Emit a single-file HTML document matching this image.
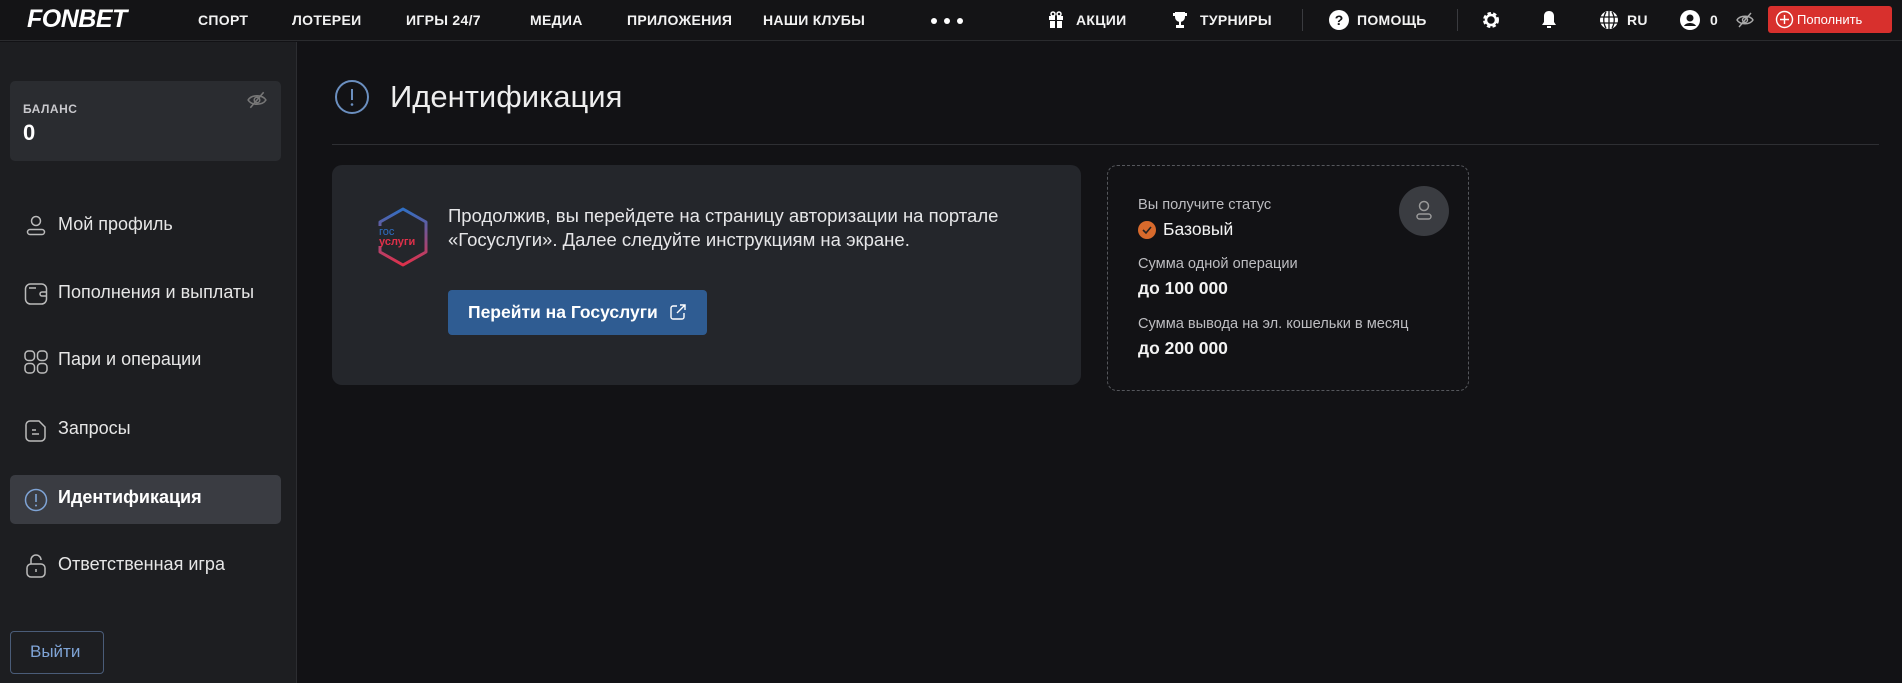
<!DOCTYPE html>
<html><head><meta charset="utf-8"><style>
*{margin:0;padding:0;box-sizing:border-box}
body{width:1902px;height:683px;background:#121215;font-family:"Liberation Sans","DejaVu Sans",sans-serif;color:#e8e8ea;position:relative;overflow:hidden}
.abs{position:absolute}
.hdr{left:0;top:0;width:1902px;height:41px;background:#141416;border-bottom:1px solid #2a2b2e}
.nav{top:12px;font-size:14px;font-weight:bold;color:#f2f2f2;white-space:nowrap;letter-spacing:.3px}
.side{left:0;top:42px;width:297px;height:641px;background:#1d1e21;border-right:1px solid #2c2d31}
.mi{left:58px;font-size:18px;color:#e6e6e6;white-space:nowrap}
.ic{left:24px}
</style></head><body>
<div class="abs hdr"></div>
<div class="abs" style="left:27px;top:5px;font-size:25px;font-weight:bold;font-style:italic;color:#fff;letter-spacing:-.5px">FONBET</div>
<div class="abs nav" style="left:198px">СПОРТ</div>
<div class="abs nav" style="left:292px">ЛОТЕРЕИ</div>
<div class="abs nav" style="left:406px">ИГРЫ 24/7</div>
<div class="abs nav" style="left:530px">МЕДИА</div>
<div class="abs nav" style="left:627px">ПРИЛОЖЕНИЯ</div>
<div class="abs nav" style="left:763px">НАШИ КЛУБЫ</div>
<svg class="abs" style="left:930px;top:17px" width="34" height="8"><circle cx="4" cy="4" r="3" fill="#fff"/><circle cx="17" cy="4" r="3" fill="#fff"/><circle cx="30" cy="4" r="3" fill="#fff"/></svg>
<svg class="abs" style="left:1048px;top:11px" width="16" height="17" viewBox="0 0 16 17"><rect x="1" y="5" width="14" height="4" fill="#fff"/><rect x="2" y="10" width="12" height="7" fill="#fff"/><rect x="7" y="5" width="2" height="12" fill="#141416"/><circle cx="5" cy="3" r="2" fill="none" stroke="#fff" stroke-width="1.5"/><circle cx="11" cy="3" r="2" fill="none" stroke="#fff" stroke-width="1.5"/></svg>
<div class="abs nav" style="left:1076px">АКЦИИ</div>
<svg class="abs" style="left:1172px;top:11px" width="16" height="17" viewBox="0 0 16 17"><path d="M3 1h10v5a5 5 0 0 1-10 0z M1 2h2v3H1z M13 2h2v3h-2z M7 10h2v4H7z M4 14h8v3H4z" fill="#fff"/></svg>
<div class="abs nav" style="left:1200px">ТУРНИРЫ</div>
<div class="abs" style="left:1302px;top:9px;width:1px;height:22px;background:#3a3b3f"></div>
<svg class="abs" style="left:1329px;top:10px" width="20" height="20"><circle cx="10" cy="10" r="10" fill="#fff"/><text x="10" y="15" font-size="14" font-weight="bold" text-anchor="middle" fill="#141416" font-family="Liberation Sans">?</text></svg>
<div class="abs nav" style="left:1357px">ПОМОЩЬ</div>
<div class="abs" style="left:1457px;top:9px;width:1px;height:22px;background:#3a3b3f"></div>
<svg class="abs" style="left:1482px;top:11px" width="18" height="18" viewBox="0 0 18 18"><circle cx="9" cy="9" r="6" fill="none" stroke="#fff" stroke-width="4" stroke-dasharray="3 2"/><circle cx="9" cy="9" r="5" fill="none" stroke="#fff" stroke-width="2.5"/></svg>
<svg class="abs" style="left:1541px;top:10px" width="16" height="19" viewBox="0 0 16 19"><path d="M8 1c-3 0-5 2-5 5v6l-2 3h14l-2-3V6c0-3-2-5-5-5z M6 16h4v2H6z" fill="#fff"/></svg>
<svg class="abs" style="left:1599px;top:10px" width="20" height="20" viewBox="0 0 20 20"><circle cx="10" cy="10" r="9" fill="#fff"/><path d="M1 7h18M1 13h18M10 1v18M7 2c-3 5-3 11 0 16M13 2c3 5 3 11 0 16" stroke="#141416" stroke-width="1.3" fill="none"/></svg>
<div class="abs nav" style="left:1627px">RU</div>
<svg class="abs" style="left:1680px;top:10px" width="20" height="20" viewBox="0 0 20 20"><circle cx="10" cy="10" r="10" fill="#fff"/><circle cx="10" cy="8" r="3.5" fill="#141416"/><path d="M4 16c2-4 10-4 12 0" fill="#141416"/></svg>
<div class="abs nav" style="left:1710px">0</div>
<svg class="abs" style="left:1736px;top:11px" width="18" height="18" viewBox="0 0 18 18" fill="none" stroke="#aaa" stroke-width="1.4"><path d="M1 9c3-5 13-5 16 0c-3 5-13 5-16 0z"/><circle cx="9" cy="9" r="2.5"/><path d="M3 16L15 2"/></svg>
<div class="abs" style="left:1768px;top:6px;width:124px;height:27px;background:#d8302d;border-radius:3px"></div>
<svg class="abs" style="left:1775px;top:10px" width="19" height="19"><circle cx="9.5" cy="9.5" r="8" fill="none" stroke="#fff" stroke-width="1.4"/><path d="M9.5 5v9M5 9.5h9" stroke="#fff" stroke-width="1.4"/></svg>
<div class="abs" style="left:1797px;top:12px;font-size:13px;color:#fff">Пополнить</div>

<div class="abs side"></div>
<div class="abs" style="left:10px;top:81px;width:271px;height:80px;background:#2a2c30;border-radius:5px"></div>
<div class="abs" style="left:23px;top:102px;font-size:12px;font-weight:bold;color:#c8c8cc;letter-spacing:.5px">БАЛАНС</div>
<div class="abs" style="left:23px;top:120px;font-size:22px;font-weight:bold;color:#fff">0</div>
<svg class="abs" style="left:247px;top:90px" width="20" height="20" viewBox="0 0 18 18" fill="none" stroke="#777" stroke-width="1.4"><path d="M1 9c3-5 13-5 16 0c-3 5-13 5-16 0z"/><circle cx="9" cy="9" r="2.5"/><path d="M3 16L15 2"/></svg>

<svg class="abs ic" style="top:214px" width="24" height="24" viewBox="0 0 24 24" fill="none" stroke="#bbb" stroke-width="1.5"><circle cx="12" cy="7" r="4.5"/><rect x="3.5" y="15.5" width="17" height="5" rx="2.5"/></svg>
<div class="abs mi" style="top:214px">Мой профиль</div>
<svg class="abs ic" style="top:282px" width="24" height="24" viewBox="0 0 24 24" fill="none" stroke="#bbb" stroke-width="1.5"><rect x="1.5" y="2" width="21" height="20" rx="5"/><path d="M5 6h7M22 10h-4a2 2 0 0 0 0 4h4"/></svg>
<div class="abs mi" style="top:282px">Пополнения и выплаты</div>
<svg class="abs ic" style="top:350px" width="24" height="24" viewBox="0 0 24 24" fill="none" stroke="#bbb" stroke-width="1.5"><rect x="1" y="1" width="9.5" height="9.5" rx="3.5"/><rect x="13.5" y="1" width="9.5" height="9.5" rx="3.5"/><rect x="1" y="13.5" width="9.5" height="9.5" rx="3.5"/><rect x="13.5" y="13.5" width="9.5" height="9.5" rx="3.5"/></svg>
<div class="abs mi" style="top:349px">Пари и операции</div>
<svg class="abs ic" style="top:419px" width="24" height="24" viewBox="0 0 24 24" fill="none" stroke="#bbb" stroke-width="1.5"><path d="M6 2h9l6 6v10a4 4 0 0 1-4 4H6a4 4 0 0 1-4-4V6a4 4 0 0 1 4-4zM8 11h4M8 15h7"/></svg>
<div class="abs mi" style="top:418px">Запросы</div>
<div class="abs" style="left:10px;top:475px;width:271px;height:49px;background:#3a3c42;border-radius:5px"></div>
<svg class="abs ic" style="top:488px" width="24" height="24" viewBox="0 0 24 24"><circle cx="12" cy="12" r="10.5" fill="none" stroke="#7fa4d6" stroke-width="1.5"/><path d="M12 6v8" stroke="#7fa4d6" stroke-width="1.6"/><circle cx="12" cy="17.5" r="1" fill="#7fa4d6"/></svg>
<div class="abs mi" style="top:487px;font-weight:bold;color:#fff">Идентификация</div>
<svg class="abs ic" style="top:553px" width="24" height="26" viewBox="0 0 24 26" fill="none" stroke="#bbb" stroke-width="1.5"><path d="M7 11V7a5 5 0 0 1 10 0"/><rect x="3" y="11" width="18" height="13" rx="4"/><path d="M12 16v3"/></svg>
<div class="abs mi" style="top:554px">Ответственная игра</div>
<div class="abs" style="left:10px;top:631px;width:94px;height:43px;border:1px solid #4a5c78;border-radius:4px"></div>
<div class="abs" style="left:30px;top:642px;font-size:17px;color:#7fa4d6">Выйти</div>

<svg class="abs" style="left:334px;top:79px" width="36" height="36"><circle cx="18" cy="18" r="16" fill="none" stroke="#6b8fc0" stroke-width="2"/><path d="M18 10v11" stroke="#6b8fc0" stroke-width="2"/><circle cx="18" cy="25.5" r="1.3" fill="#6b8fc0"/></svg>
<div class="abs" style="left:390px;top:79px;font-size:31px;color:#eee">Идентификация</div>
<div class="abs" style="left:332px;top:144px;width:1547px;height:1px;background:#2e2f33"></div>

<div class="abs" style="left:332px;top:165px;width:749px;height:220px;background:#24262b;border-radius:10px"></div>
<svg class="abs" style="left:372px;top:206px" width="62" height="62" viewBox="0 0 62 62"><defs><linearGradient id="g" x1="0" y1="0" x2="0" y2="1"><stop offset="0" stop-color="#2f6fc4"/><stop offset="1" stop-color="#e0304a"/></linearGradient></defs><path d="M31 3L54 16v30L31 59L8 46V16z" fill="none" stroke="url(#g)" stroke-width="3" stroke-linejoin="round"/><rect x="4" y="20" width="32" height="20" fill="#24262b"/><text x="7" y="29" font-size="11" fill="#2f6fc4" font-family="Liberation Sans">гос</text><text x="7" y="39" font-size="11" fill="#e0304a" font-weight="bold" font-family="Liberation Sans">услуги</text></svg>
<div class="abs" style="left:448px;top:204px;font-size:18.5px;line-height:24px;color:#e6e6e8">Продолжив, вы перейдете на страницу авторизации на портале<br>«Госуслуги». Далее следуйте инструкциям на экране.</div>
<div class="abs" style="left:448px;top:290px;width:259px;height:45px;background:#2f5c92;border-radius:4px"></div>
<div class="abs" style="left:468px;top:302px;font-size:17.5px;font-weight:bold;color:#fff">Перейти на Госуслуги</div>
<svg class="abs" style="left:669px;top:303px" width="18" height="18" viewBox="0 0 18 18" fill="none" stroke="#fff" stroke-width="1.4"><path d="M8 3H4a2 2 0 0 0-2 2v9a2 2 0 0 0 2 2h9a2 2 0 0 0 2-2v-4M11 2h5v5M16 2L8 10"/></svg>

<div class="abs" style="left:1107px;top:165px;width:362px;height:226px;border:1px dashed #55575c;border-radius:10px"></div>
<div class="abs" style="left:1138px;top:197px;font-size:14.6px;color:#bdbdc1">Вы получите статус</div>
<svg class="abs" style="left:1138px;top:221px" width="18" height="18"><circle cx="9" cy="9" r="9" fill="#d86a2c"/><path d="M5 9l3 3 5-6" stroke="#222" stroke-width="1.6" fill="none"/></svg>
<div class="abs" style="left:1163px;top:219px;font-size:17.5px;color:#f2f2f2">Базовый</div>
<div class="abs" style="left:1138px;top:256px;font-size:14.6px;color:#bdbdc1">Сумма одной операции</div>
<div class="abs" style="left:1138px;top:278px;font-size:17.5px;font-weight:bold;color:#f2f2f2">до 100 000</div>
<div class="abs" style="left:1138px;top:316px;font-size:14.6px;color:#bdbdc1">Сумма вывода на эл. кошельки в месяц</div>
<div class="abs" style="left:1138px;top:338px;font-size:17.5px;font-weight:bold;color:#f2f2f2">до 200 000</div>
<svg class="abs" style="left:1399px;top:186px" width="50" height="50"><circle cx="25" cy="25" r="25" fill="#3a3c41"/><circle cx="25" cy="20" r="4.5" fill="none" stroke="#999" stroke-width="1.5"/><rect x="18" y="28" width="14" height="5" rx="2.5" fill="none" stroke="#999" stroke-width="1.5"/></svg>
</body></html>
